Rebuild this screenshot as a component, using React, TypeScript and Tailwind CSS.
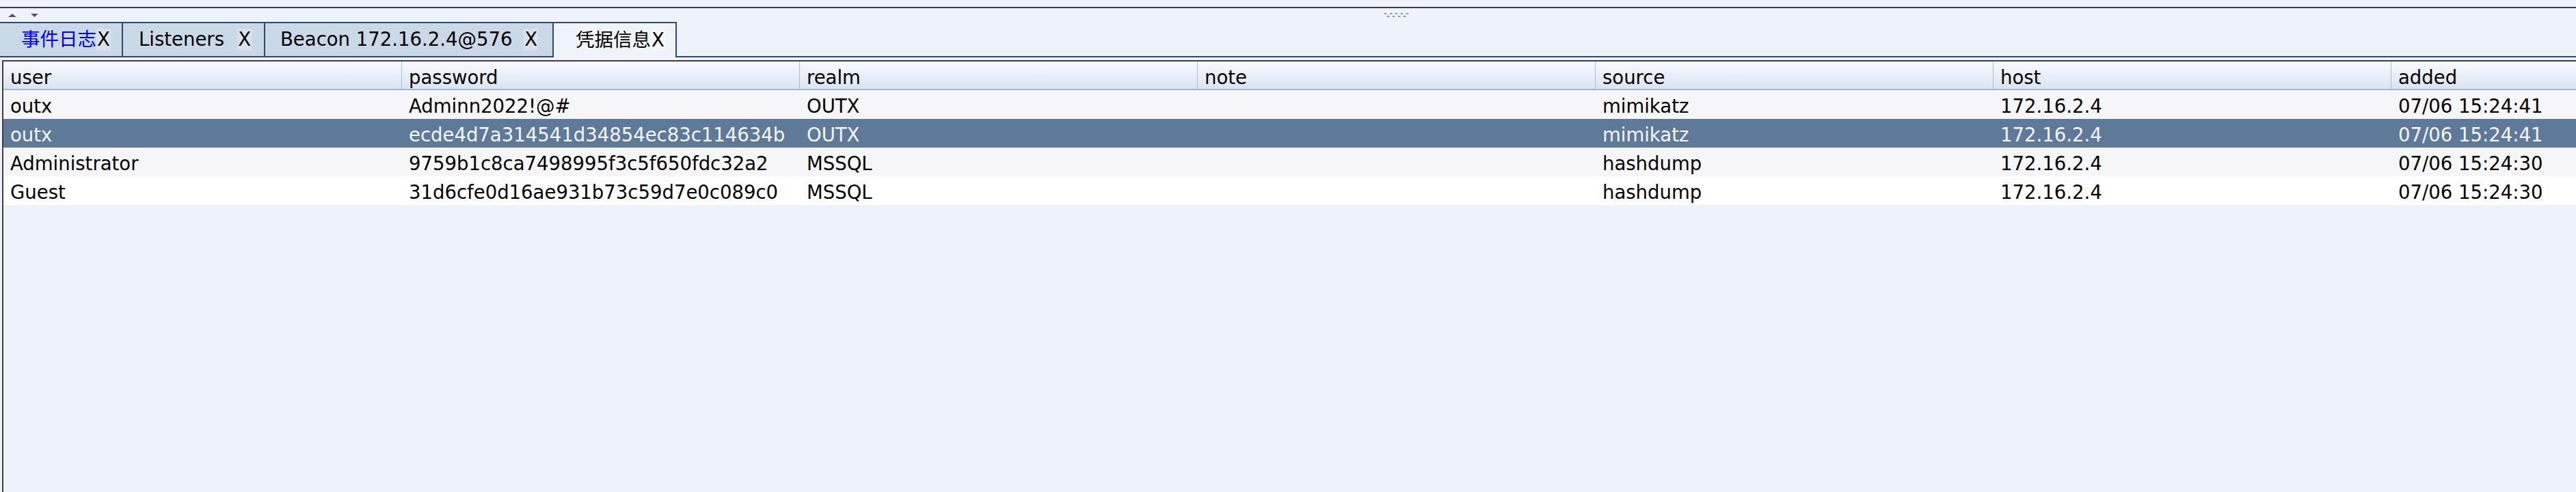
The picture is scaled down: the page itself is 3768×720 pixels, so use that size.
import React from "react";

const FONT = { fontFamily: '"DejaVu Sans", "Noto Sans CJK SC", sans-serif' };

const cols = ["user", "password", "realm", "note", "source", "host", "added"];
const rows = [
  ["outx", "Adminn2022!@#", "OUTX", "", "mimikatz", "172.16.2.4", "07/06 15:24:41"],
  ["outx", "ecde4d7a314541d34854ec83c114634b", "OUTX", "", "mimikatz", "172.16.2.4", "07/06 15:24:41"],
  ["Administrator", "9759b1c8ca7498995f3c5f650fdc32a2", "MSSQL", "", "hashdump", "172.16.2.4", "07/06 15:24:30"],
  ["Guest", "31d6cfe0d16ae931b73c59d7e0c089c0", "MSSQL", "", "hashdump", "172.16.2.4", "07/06 15:24:30"],
];

const GRID = "grid grid-cols-[582px_582px_582px_582px_582px_582px_1fr]";

function Grip() {
  const top = [0, 8, 16, 24, 32];
  const bot = [4, 12, 20, 28];
  return (
    <svg width="36" height="6" viewBox="0 0 36 6" className="block">
      {top.map((x) => (
        <g key={"t" + x}>
          <rect x={x} y={0} width={2} height={2} fill="#6f88a6" />
          <rect x={x + 2} y={0} width={2} height={2} fill="#b3c2d4" />
        </g>
      ))}
      {bot.map((x) => (
        <g key={"b" + x}>
          <rect x={x} y={4} width={2} height={2} fill="#6f88a6" />
          <rect x={x + 2} y={4} width={2} height={2} fill="#b3c2d4" />
        </g>
      ))}
    </svg>
  );
}

function XBox({ active }: { active?: boolean }) {
  return (
    <span
      className={
        "inline-flex items-center h-[32px] px-[1px] text-black " +
        (active ? "bg-[#f5f7fb]" : "bg-[#d7e2ed]")
      }
    >
      X
    </span>
  );
}

export default function App() {
  return (
    <div
      className="w-[3768px] h-[720px] bg-[#eef2fa] overflow-hidden flex flex-col text-[27.5px] text-black"
      style={FONT}
    >
      {/* top strip */}
      <div className="h-[10px]" />
      <div className="h-[2px] bg-[#3d3d3d]" />
      {/* split pane divider */}
      <div className="h-[20px] flex items-center">
        <div className="flex items-center pl-[12px] gap-[21px]">
          <svg width="12" height="5" viewBox="0 0 12 5" className="block">
            <polygon points="6,0 12,5 0,5" fill="#555" />
          </svg>
          <svg width="11" height="5" viewBox="0 0 11 5" className="block">
            <polygon points="0,0 11,0 5.5,5" fill="#555" />
          </svg>
        </div>
        <div className="ml-[1969px]">
          <Grip />
        </div>
      </div>

      {/* tab bar */}
      <div className="h-[52px] flex">
        <div className="w-[180px] h-full flex items-center justify-between pl-[31px] pr-[17px] bg-[#c9d9e8] border-t-2 border-b-2 border-r-2 border-[#2f4b6b] whitespace-nowrap">
          <span className="text-[#0000ff]">事件日志</span>
          <XBox />
        </div>
        <div className="w-[208px] h-full flex items-center justify-between pl-[23px] pr-[18px] bg-[#c9d9e8] border-t-2 border-b-2 border-r-2 border-[#2f4b6b] whitespace-nowrap">
          <span>Listeners</span>
          <XBox />
        </div>
        <div className="w-[420px] h-full flex items-center justify-between pl-[22px] pr-[21px] bg-[#c9d9e8] border-t-2 border-b-2 border-[#2f4b6b] whitespace-nowrap">
          <span>Beacon 172.16.2.4@576</span>
          <XBox />
        </div>
        <div className="w-[182px] h-full flex items-center justify-between pl-[32px] pr-[18px] bg-[#eff3fa] border-t-2 border-l-2 border-r-2 border-[#2f4b6b] whitespace-nowrap">
          <span>凭据信息</span>
          <XBox active />
        </div>
        <div className="flex-1 h-full border-b-2 border-[#2f4b6b]" />
      </div>

      <div className="h-[4px]" />

      {/* table */}
      <div className="flex-1 ml-[3px] border-l-2 border-t-2 border-[#3f3f3f] bg-[#eef2fa] flex flex-col">
        <div
          className={
            GRID +
            " h-[42px] border-b-2 border-[#9fbad7] bg-gradient-to-b from-[#f8faff] to-[#dae4f1]"
          }
        >
          {cols.map((c, i) => (
            <div
              key={c}
              className={
                "h-full flex items-center pl-[10px] pt-[3px] whitespace-nowrap " +
                (i > 0 ? "border-l border-[#a6c0dc]" : "")
              }
            >
              {c}
            </div>
          ))}
        </div>
        {rows.map((r, ri) => {
          const selected = ri === 1;
          const bg = selected ? "bg-[#5e7a98] text-[#f4f6fa]" : ri % 2 === 0 ? "bg-[#f6f6f8]" : "bg-white";
          return (
            <div key={ri} className={GRID + " h-[42px] " + bg}>
              {r.map((v, i) => (
                <div
                  key={i}
                  className={
                    "h-full flex items-center pl-[10px] pt-[3px] whitespace-nowrap " +
                    (i > 0 ? "border-l border-transparent" : "")
                  }
                >
                  {v}
                </div>
              ))}
            </div>
          );
        })}
        <div className="flex-1" />
      </div>
    </div>
  );
}
